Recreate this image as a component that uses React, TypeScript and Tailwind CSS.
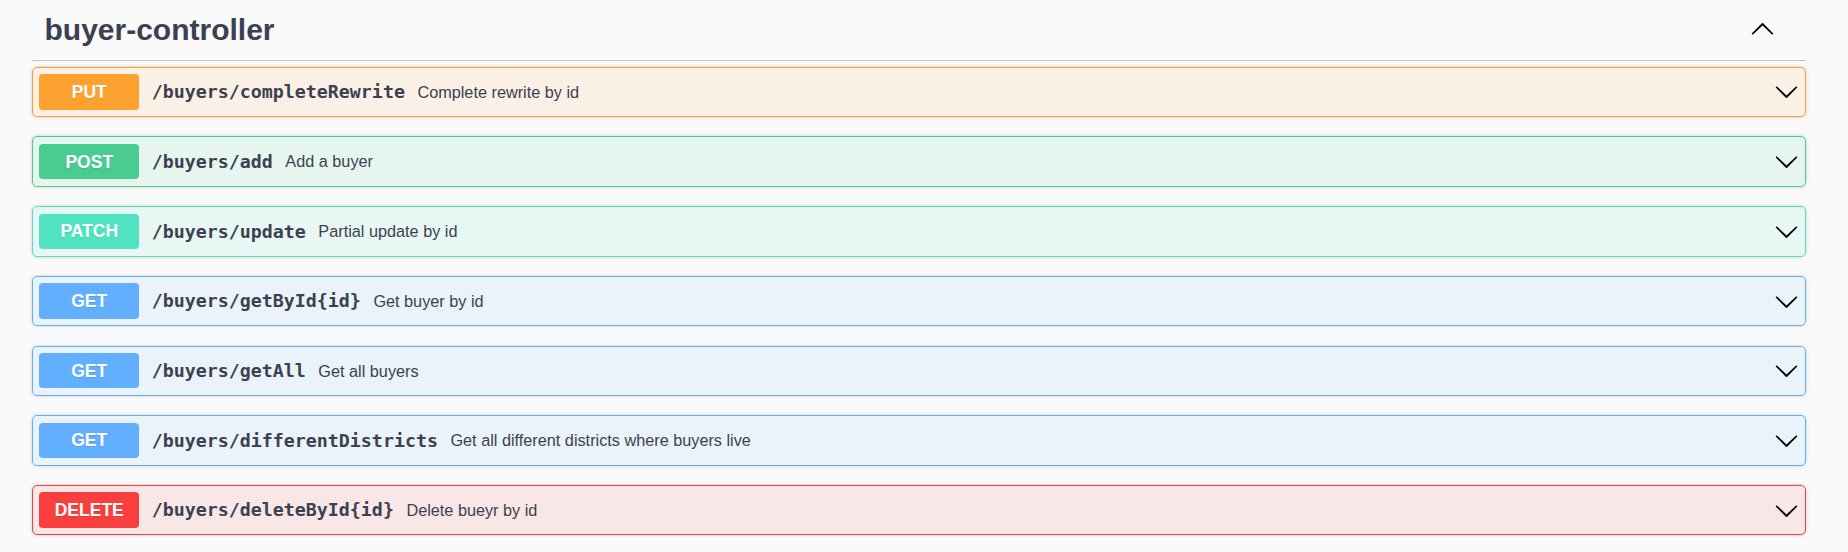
import React from 'react';

type Method = 'PUT' | 'POST' | 'PATCH' | 'GET' | 'DELETE';

interface Operation {
  method: Method;
  path: string;
  summary: string;
}

const methodStyles: Record<Method, { block: string; badge: string }> = {
  PUT: { block: 'border-[#fca130] bg-[#fca130]/10', badge: 'bg-[#fca130]' },
  POST: { block: 'border-[#49cc90] bg-[#49cc90]/10', badge: 'bg-[#49cc90]' },
  PATCH: { block: 'border-[#50e3c2] bg-[#50e3c2]/10', badge: 'bg-[#50e3c2]' },
  GET: { block: 'border-[#61affe] bg-[#61affe]/10', badge: 'bg-[#61affe]' },
  DELETE: { block: 'border-[#f93e3e] bg-[#f93e3e]/10', badge: 'bg-[#f93e3e]' },
};

const operations: Operation[] = [
  { method: 'PUT', path: '/buyers/completeRewrite', summary: 'Complete rewrite by id' },
  { method: 'POST', path: '/buyers/add', summary: 'Add a buyer' },
  { method: 'PATCH', path: '/buyers/update', summary: 'Partial update by id' },
  { method: 'GET', path: '/buyers/getById{id}', summary: 'Get buyer by id' },
  { method: 'GET', path: '/buyers/getAll', summary: 'Get all buyers' },
  { method: 'GET', path: '/buyers/differentDistricts', summary: 'Get all different districts where buyers live' },
  { method: 'DELETE', path: '/buyers/deleteById{id}', summary: 'Delete bueyr by id' },
];

const Arrow: React.FC<{ up?: boolean }> = ({ up }) => (
  <svg
    width="25"
    height="25"
    viewBox="0 0 20 20"
    className={up ? 'rotate-180' : ''}
    aria-hidden="true"
  >
    <path
      fill="#000"
      d="M17.418 6.109c.272-.268.709-.268.979 0s.271.701 0 .969l-7.908 7.83c-.27.268-.707.268-.979 0l-7.908-7.83c-.27-.268-.27-.701 0-.969.271-.268.709-.268.979 0L10 13.25l7.418-7.141z"
    />
  </svg>
);

const OperationRow: React.FC<{ op: Operation }> = ({ op }) => {
  const s = methodStyles[op.method];
  return (
    <div
      className={`flex h-[50.4px] items-center rounded-[5px] border-[1.25px] px-[6.25px] shadow-[0_0_3.75px_rgba(0,0,0,0.19)] ${s.block}`}
    >
      <span
        className={`flex h-[35.4px] w-[100px] items-center justify-center rounded-[3.75px] font-['Liberation_Sans',Arial,sans-serif] text-[17.5px] font-bold text-white [text-shadow:0_1px_0_rgba(0,0,0,0.1)] ${s.badge}`}
      >
        {op.method}
      </span>
      <span className="px-[12.5px] font-['DejaVu_Sans_Mono',monospace] text-[18.3px] font-bold text-[#3b4151]">
        {op.path}
      </span>
      <span className="flex-1 font-['Liberation_Sans',Arial,sans-serif] text-[16.25px] text-[#3b4151]">
        {op.summary}
      </span>
      <span className="flex items-center">
        <Arrow />
      </span>
    </div>
  );
};

export default function App() {
  return (
    <div className="min-h-[552px] w-full bg-[#fafafa]">
      <div className="ml-[32px] w-[1774px]">
        <div className="mb-[6.25px] flex items-center justify-between border-b border-[rgba(59,65,81,0.3)] py-[12.5px] pl-[12.5px] pr-[31px]">
          <h3 className="font-['Liberation_Sans',Arial,sans-serif] text-[30px] leading-[34.5px] font-bold text-[#3b4151]">
            buyer-controller
          </h3>
          <Arrow up />
        </div>
        <div className="flex flex-col gap-[19.3px]">
          {operations.map((op) => (
            <OperationRow key={op.path} op={op} />
          ))}
        </div>
      </div>
    </div>
  );
}
